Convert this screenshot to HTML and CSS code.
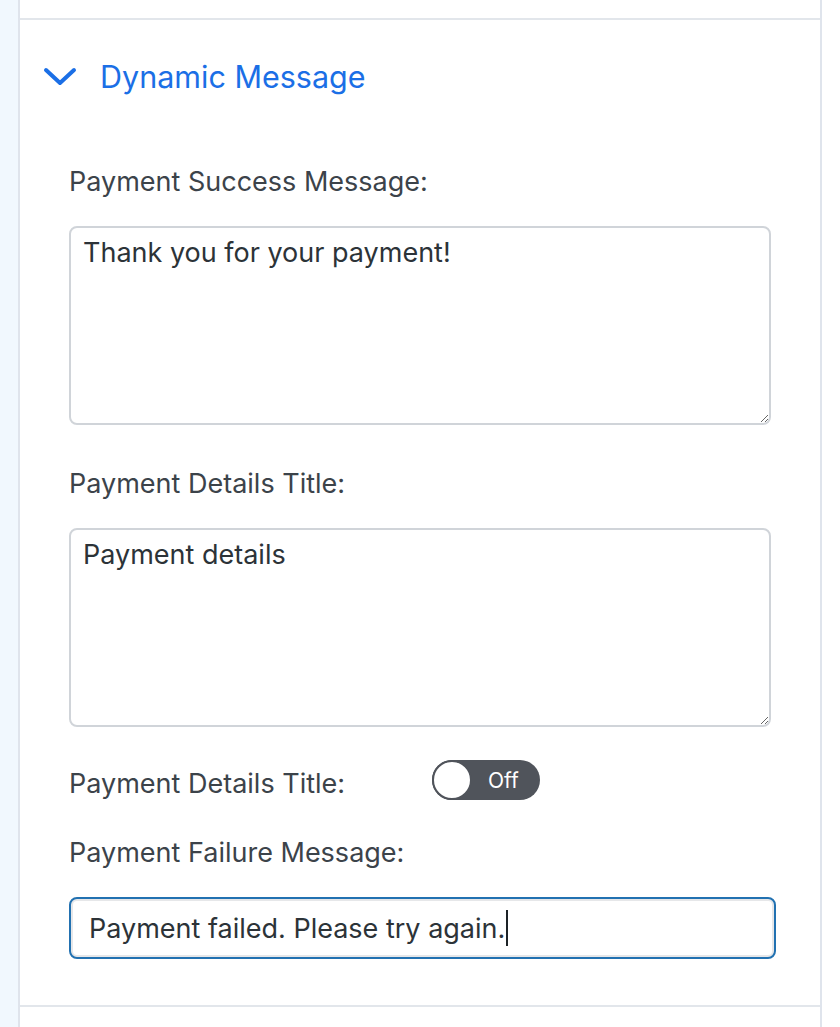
FILE: index.html
```html
<!DOCTYPE html>
<html lang="en">
<head>
  <meta charset="UTF-8" />
  <meta name="viewport" content="width=device-width, initial-scale=1" />
  <title>Dynamic Message</title>
  <link rel="stylesheet" href="styles.css">
</head>
<body>

<div class="page">
  <div class="rail"></div>
  <div class="panel">
    <div class="prev-section"></div>

    <div class="section">
      <div class="section-head">
        <svg class="chevron" width="34" height="20" viewBox="0 0 34 20">
          <path d="M3 3 L17 16 L31 3" fill="none" stroke="currentColor" stroke-width="4" stroke-linecap="round" stroke-linejoin="round" />
        </svg>
        <span class="section-title">Dynamic Message</span>
      </div>

      <div class="section-body">
        <label class="field-label" for="successMsg">Payment Success Message:</label>
        <textarea id="successMsg" class="field-area">Thank you for your payment!</textarea>

        <label class="field-label" for="detailsTitle">Payment Details Title:</label>
        <textarea id="detailsTitle" class="field-area">Payment details</textarea>

        <div class="toggle-row">
          <span class="field-label inline">Payment Details Title:</span>
          <div class="toggle">
            <span class="knob"></span>
            <span class="toggle-text">Off</span>
          </div>
        </div>

        <label class="field-label">Payment Failure Message:</label>
        <div class="field-input focused">Payment failed. Please try again.<span class="caret"></span></div>
      </div>
    </div>
  </div>
</div>

</body>
</html>
```

FILE: styles.css
```css
* { box-sizing: border-box; }
body, html {
  margin: 0; padding: 0; height: 100%;
  font-family: Inter, "Noto Sans", sans-serif;
  background: #fff;
}
.page {
  display: flex;
  height: 100vh;
}
.rail {
  width: 18px;
  background: #f1f8fe;
}
.panel {
  width: 804px;
  border-left: 2px solid #dfe4ec;
  border-right: 2px solid #dfe4ec;
}
.prev-section {
  height: 20px;
  border-bottom: 2px solid #e2e6eb;
}
.section {
  border-bottom: 2px solid #e2e6eb;
  padding-bottom: 46px;
}
.section-head {
  display: flex;
  align-items: center;
  gap: 23px;
  padding: 39px 0 0 23px;
  color: #1b6fe6;
}
.chevron {
  display: block;
}
.section-title {
  font-size: 30.5px;
  line-height: 36px;
}
.section-body {
  padding: 0 44px 0 49px;
  display: flex;
  flex-direction: column;
}
.field-label {
  display: block;
  font-size: 27px;
  line-height: 36px;
  color: #3c434a;
  margin-top: 69px;
  margin-bottom: 26px;
}
.field-area + .field-label {
  margin-top: 41px;
}
.field-area {
  width: 702px;
  height: 199px;
  border: 2px solid #d0d4d9;
  border-radius: 8px;
  padding: 7px 12px;
  font-family: inherit;
  font-size: 27px;
  line-height: 36px;
  color: #2c3338;
  resize: vertical;
  outline: none;
}
.toggle-row {
  display: flex;
  align-items: center;
  margin-top: 33px;
}
.field-label.inline {
  width: 363px;
  margin: 1px 0 0 0;
}
.toggle {
  display: flex;
  align-items: center;
  width: 108px;
  height: 40px;
  margin-bottom: 6px;
  border-radius: 20px;
  background: #50545b;
}
.knob {
  width: 40px;
  height: 40px;
  border-radius: 50%;
  background: #fff;
  border: 2px solid #50545b;
}
.toggle-text {
  color: #fff;
  font-size: 21px;
  margin-left: 16px;
}
.toggle-row + .field-label {
  margin-top: 29px;
}
.field-input {
  width: 707px;
  height: 62px;
  border: 2px solid #2271b1;
  border-radius: 8px;
  box-shadow: inset 0 0 0 2px #e6e7e9;
  padding: 0 18px;
  display: flex;
  align-items: center;
  font-size: 27px;
  color: #2c3338;
}
.caret {
  display: inline-block;
  width: 2px;
  height: 36px;
  background: #1d2327;
  margin-left: 1px;
}
```
